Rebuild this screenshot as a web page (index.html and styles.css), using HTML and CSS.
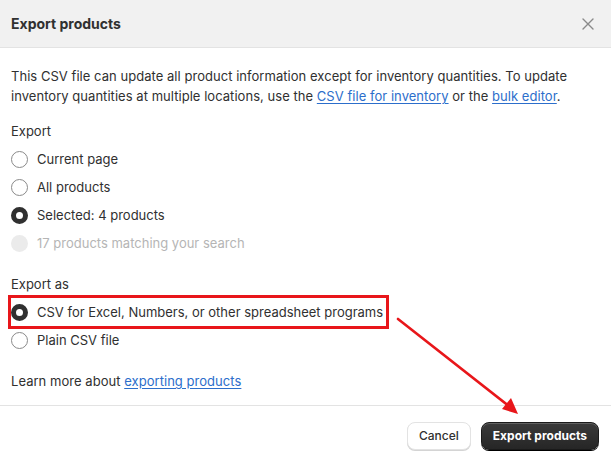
FILE: index.html
```html
<!DOCTYPE html>
<html>
<head>
<meta charset="utf-8">
<link rel="stylesheet" href="styles.css">
</head>
<body>
<div class="dialog">
  <header class="head">
    <h1 class="title">Export products</h1>
    <svg class="close" width="12" height="12" viewBox="0 0 12 12"><path d="M1 1L11 11M11 1L1 11" stroke="#8a8a8a" stroke-width="1.4" fill="none" stroke-linecap="round"/></svg>
  </header>
  <main class="body">
    <p class="intro">This CSV file can update all product information except for inventory quantities. To update inventory quantities at multiple locations, use the <a href="#">CSV file for inventory</a> or the <a href="#">bulk editor</a>.</p>
    <div class="label">Export</div>
    <div class="group">
      <div class="row"><span class="radio"></span><span>Current page</span></div>
      <div class="row"><span class="radio"></span><span>All products</span></div>
      <div class="row"><span class="radio on"></span><span>Selected: 4 products</span></div>
      <div class="row disabled"><span class="radio off"></span><span>17 products matching your search</span></div>
    </div>
    <div class="label second">Export as</div>
    <div class="group">
      <div class="row hl"><span class="radio on"></span><span>CSV for Excel, Numbers, or other spreadsheet programs</span><span class="redbox"></span></div>
      <div class="row"><span class="radio"></span><span>Plain CSV file</span></div>
    </div>
    <p class="learn">Learn more about <a href="#">exporting products</a></p>
  </main>
  <footer class="foot">
    <button class="btn">Cancel</button>
    <button class="btn primary">Export products</button>
  </footer>
  <svg class="arrow" width="611" height="460" viewBox="0 0 611 460">
    <line x1="398" y1="319" x2="510" y2="407" stroke="#e8161a" stroke-width="2.6" stroke-linecap="round"/>
    <polygon points="518,414 502,409 511,398" fill="#e8161a"/>
  </svg>
</div>
</body>
</html>
```
FILE: styles.css
```css
* { box-sizing: border-box; }
html, body { margin: 0; padding: 0; background: #fff; }
body {
  font-family: Inter, "Noto Sans", "Liberation Sans", sans-serif;
  font-size: 13px;
  color: #303030;
  width: 611px;
  height: 460px;
  overflow: hidden;
}
.dialog { position: relative; width: 611px; height: 460px; display: flex; flex-direction: column; }
.head {
  height: 48px;
  background: #f1f1f1;
  border-bottom: 1px solid #e3e3e3;
  display: flex;
  align-items: center;
  justify-content: space-between;
  padding: 0 17px 0 11px;
}
.title { margin: 0; font-size: 14px; font-weight: 650; color: #303030; }
.close { display: block; }
.body { padding: 18px 11px 0 11px; flex: 1; }
p { margin: 0; line-height: 20px; letter-spacing: 0.04px; }
a { color: #2c6ecb; text-decoration: underline; text-underline-offset: 2px; }
.intro { margin-bottom: 15px; }
.label { line-height: 20px; margin-bottom: 4px; }
.label.second { margin-top: 17px; }
.row { position: relative; display: flex; align-items: center; gap: 9px; height: 28px; }
.radio {
  width: 17px; height: 17px; border-radius: 50%;
  border: 1px solid #8a8a8a; background: #fff; flex: none;
}
.radio.on { border: 5px solid #303030; }
.radio.off { border: none; background: #ebebeb; }
.disabled { color: #b5b5b5; }
.redbox {
  position: absolute;
  left: -3px; top: -3px;
  width: 381px; height: 34px;
  border: 3px solid #e8161a;
}
.learn { margin-top: 17px; }
.foot {
  height: 55px;
  border-top: 1px solid #e3e3e3;
  display: flex;
  justify-content: flex-end;
  align-items: center;
  gap: 10px;
  padding: 5px 12px 0 0;
}
.btn {
  font-family: inherit;
  font-size: 12px;
  height: 28px;
  border-radius: 8px;
  border: 1px solid #e3e3e3;
  background: #fff;
  color: #303030;
  padding: 0 11px;
  font-weight: 500;
  box-shadow: 0 1px 0 #d4d4d4;
}
.btn.primary {
  background: linear-gradient(#3a3a3a, #262626);
  color: #fff;
  font-weight: 650;
  border: 1px solid #1a1a1a;
  box-shadow: 0 1px 0 #000, inset 0 1px 0 rgba(255,255,255,0.2);
}
.arrow { position: absolute; left: 0; top: 0; pointer-events: none; }
```
